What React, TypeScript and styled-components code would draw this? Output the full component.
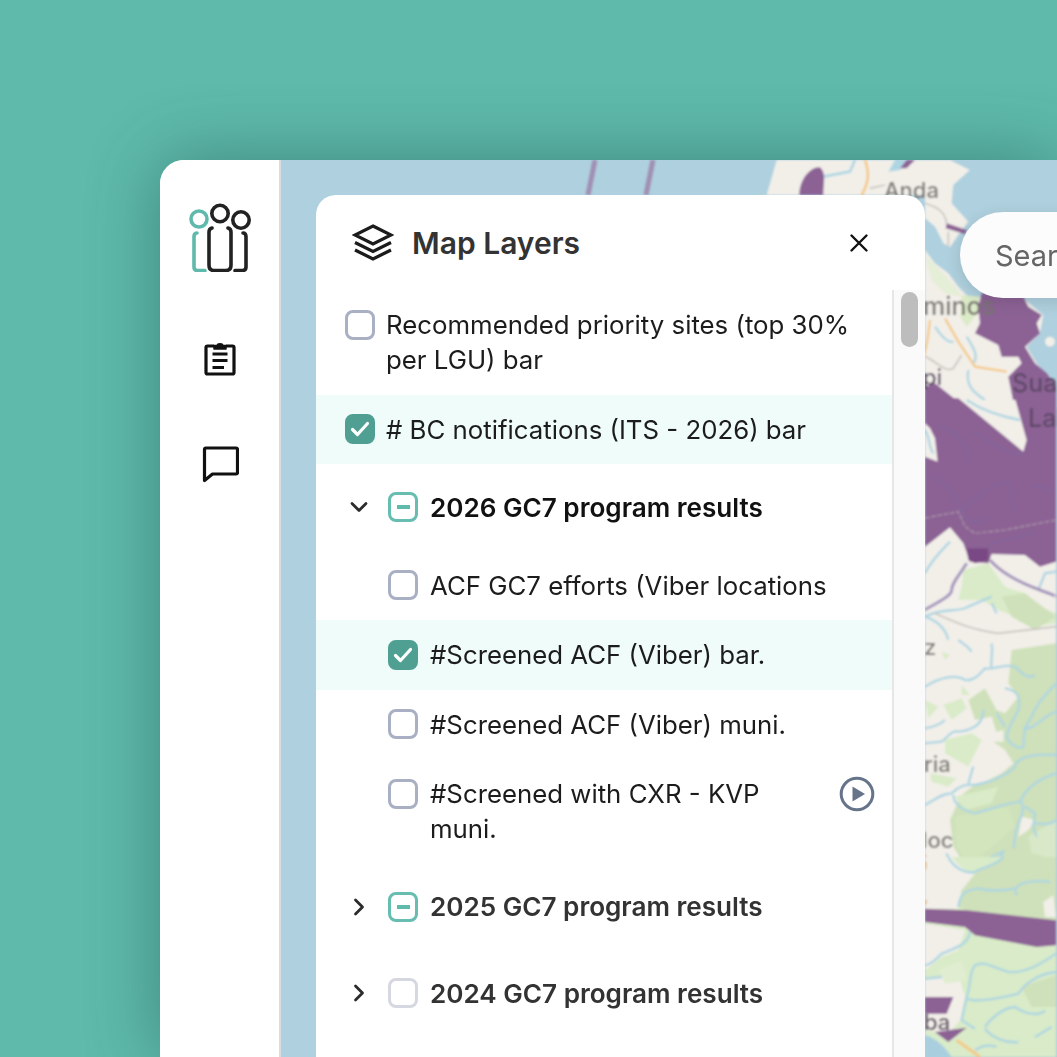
import React from 'react';
import styled, { createGlobalStyle, css } from 'styled-components';

const GlobalStyle = createGlobalStyle`
  html, body {
    margin: 0;
    height: 100%;
    overflow: hidden;
    background: #5fbaac;
    font-family: Inter, "Liberation Sans", sans-serif;
  }
`;

const Page = styled.div`
  height: 100vh;
  padding: 160px 0 0 160px;
  box-sizing: border-box;
  overflow: hidden;
`;

const AppWindow = styled.div`
  display: flex;
  height: 100%;
  border-radius: 24px 0 0 0;
  background: #fff;
  overflow: hidden;
  box-shadow: 0 0 70px rgba(20, 70, 62, 0.45);
`;

const Sidebar = styled.nav`
  flex: 0 0 121px;
  box-sizing: border-box;
  border-right: 2px solid #dcdcdc;
  display: flex;
  flex-direction: column;
  align-items: center;
  padding-top: 42px;
  background: #fff;
`;

const NavIcon = styled.div<{ $top: number }>`
  margin-top: ${p => p.$top}px;
  display: flex;
`;

const MapArea = styled.main`
  flex: 1;
  position: relative;
  overflow: hidden;
  background: #afd0de;
`;

const MapDrawing = styled.svg`
  position: absolute;
  inset: 0;
  width: 100%;
  height: 100%;
`;

const SearchPill = styled.div`
  position: absolute;
  left: 679px;
  top: 52px;
  width: 400px;
  height: 86px;
  box-sizing: border-box;
  padding-left: 35px;
  display: flex;
  align-items: center;
  border-radius: 43px;
  background: #fcfcfc;
  color: #666;
  font-size: 29px;
  box-shadow: 0 4px 16px rgba(0, 0, 0, 0.12);
`;

const Panel = styled.section`
  position: absolute;
  left: 35px;
  top: 35px;
  bottom: -20px;
  width: 609px;
  background: #fff;
  border-radius: 20px 20px 0 0;
  display: flex;
  flex-direction: column;
  overflow: hidden;
`;

const PanelHeader = styled.header`
  flex: 0 0 95px;
  display: flex;
  align-items: center;
  padding: 0 56px 0 36px;
  gap: 18px;
  box-sizing: border-box;
`;

const PanelTitle = styled.h2`
  flex: 1;
  margin: 0;
  font-size: 30px;
  font-weight: 600;
  color: #333;
`;

const PanelBody = styled.div`
  flex: 1;
  display: flex;
  min-height: 0;
`;

const LayerList = styled.div`
  flex: 1;
  min-width: 0;
`;

const ScrollTrack = styled.div`
  flex: 0 0 33px;
  box-sizing: border-box;
  border-left: 2px solid #e6e6e6;
  background: #fafafa;
  padding: 2px 7px 0 7px;
`;

const ScrollThumb = styled.div`
  height: 55px;
  border-radius: 9px;
  background: #bdbdbd;
`;

const Row = styled.div<{ $active?: boolean; $child?: boolean }>`
  display: flex;
  align-items: flex-start;
  gap: ${p => (p.$child ? 12 : 11)}px;
  padding: 17.25px 17px 17.25px ${p => (p.$child ? 72 : 29)}px;
  background: ${p => (p.$active ? '#effcfa' : 'transparent')};
`;

const GroupRow = styled.div`
  display: flex;
  align-items: center;
  height: 86.5px;
  padding-left: 29px;
`;

const ChevronSlot = styled.div`
  flex: 0 0 43px;
  display: flex;
  padding-left: 2px;
  box-sizing: border-box;
`;

const Label = styled.span`
  flex: 1;
  font-size: 25.8px;
  line-height: 35px;
  color: #1c1c1c;
`;

const GroupLabel = styled.span<{ $open?: boolean }>`
  margin-left: 12px;
  font-size: 26.1px;
  font-weight: 600;
  color: ${p => (p.$open ? '#111' : '#333')};
`;

const boxBase = css`
  flex: 0 0 30px;
  width: 30px;
  height: 30px;
  box-sizing: border-box;
  border-radius: 8px;
  display: flex;
  align-items: center;
  justify-content: center;
`;

const Box = styled.div<{ $state?: 'empty' | 'checked' | 'partial' | 'muted' }>`
  ${boxBase}
  margin-top: 2.5px;
  border: 3px solid
    ${p =>
      p.$state === 'checked'
        ? '#4f9f92'
        : p.$state === 'partial'
          ? '#66bdb0'
          : p.$state === 'muted'
            ? '#d5d8e1'
            : '#a9b0c3'};
  background: ${p => (p.$state === 'checked' ? '#4f9f92' : '#fff')};
`;

const GroupBox = styled(Box)`
  margin-top: 0;
`;

const Dash = styled.div`
  width: 13px;
  height: 4px;
  background: #5fbaac;
`;

const PlayButton = styled.div`
  flex: 0 0 36px;
  display: flex;
`;

const Check = () => (
  <svg width="22" height="22" viewBox="0 0 22 22" fill="none" stroke="#fff" strokeWidth="3.2" strokeLinecap="round" strokeLinejoin="round">
    <path d="M3.500 11.500 8.500 16.500 18.500 5.500" />
  </svg>
);

const Chevron = ({ open }: { open?: boolean }) => (
  <svg width="24" height="24" viewBox="0 0 24 24" fill="none" stroke="#2b2b2b" strokeWidth="2.8" strokeLinecap="round" strokeLinejoin="round">
    {open ? <path d="M5 8.500 12 15.500 19 8.500" /> : <path d="M8.500 5 15.500 12 8.500 19" />}
  </svg>
);

const Logo = () => (
  <svg width="64" height="70" viewBox="0 0 64 70" fill="none" strokeWidth="3.600" strokeLinecap="round" strokeLinejoin="round">
    <circle cx="11" cy="17" r="8" stroke="#5fbaac" />
    <circle cx="32" cy="11.500" r="8.200" stroke="#222" />
    <circle cx="53" cy="18" r="8.200" stroke="#222" />
    <path d="M9 31C6.500 31 6 33 6 35V65C6 67.500 7 68.500 9.500 68.500H17" stroke="#5fbaac" />
    <path d="M24 26C22 26.500 21 28 21 30V63C21 66.500 23 68.500 26 68.500H38C41 68.500 43 66.500 43 63V30C43 28 42 26.500 40 26" stroke="#222" />
    <path d="M55 31C57.500 31 58 33 58 35V65C58 67.500 57 68.500 54.500 68.500H47" stroke="#222" />
  </svg>
);

const ClipboardIcon = () => (
  <svg width="32" height="34" viewBox="0 0 32 34" fill="none" stroke="#111" strokeWidth="3.200" strokeLinejoin="round">
    <path d="M10 4H3.500C2.500 4 2 4.500 2 5.500V30.500C2 31.500 2.500 32 3.500 32H28.500C29.500 32 30 31.500 30 30.500V5.500C30 4.500 29.500 4 28.500 4H22" />
    <path d="M10 3.500H13C13.500 1 18.500 1 19 3.500H22V7H10Z" fill="#111" strokeWidth="1.500" />
    <path d="M8.500 12H23.500M8.500 18.500H23.500M8.500 25.500H20" />
  </svg>
);

const ChatIcon = () => (
  <svg width="38" height="38" viewBox="0 0 38 38" fill="none" stroke="#111" strokeWidth="3.200" strokeLinejoin="round">
    <path d="M3.500 34.500V3.500C3.500 2.500 4 2 5 2H35C36 2 36.500 2.500 36.500 3.500V26.500C36.500 27.500 36 28 35 28H11.500Z" />
  </svg>
);

const LayersIcon = () => (
  <svg width="42" height="38" viewBox="0 0 42 38" fill="none" stroke="#1c1c1c" strokeWidth="3.200" strokeLinejoin="miter" strokeLinecap="butt">
    <path d="M21 2 39 11 21 20 3 11Z" />
    <path d="M3 18.500 21 27.500 39 18.500" />
    <path d="M3 26 21 35 39 26" />
  </svg>
);

const CloseIcon = () => (
  <svg width="20" height="20" viewBox="0 0 20 20" stroke="#111" strokeWidth="2.400" strokeLinecap="round">
    <path d="M2.500 2.500 17.500 17.500M17.500 2.500 2.500 17.500" />
  </svg>
);

const PlayIcon = () => (
  <svg width="36" height="36" viewBox="0 0 36 36">
    <circle cx="18" cy="18" r="15.800" fill="none" stroke="#66748a" strokeWidth="3" />
    <path d="M13.500 10.500 26 18 13.500 25.500Z" fill="#66748a" />
  </svg>
);

const LAND = '#f2efe9';
const RIVER = '#aed6e2';
const PURPLE = '#8c6295';
const FOREST = '#cfe1ba';
const MEADOW = '#d9ebc8';

// Strip to the right of the panel, cut into crops; each group is in 3x units.
const northRivers = [
  'M30 500C50 530 70 550 85 545',
  'M125 530C150 570 160 590 145 610',
  'M130 630C120 680 150 700 180 720',
];

const middleRivers = [
  'M0 520C20 480 50 450 75 425',
  'M0 650C60 620 100 640 130 620L200 590',
  'M340 570L360 520 393 515',
  'M200 610L215 640',
  'M0 650C30 660 60 680 70 720',
];

const southRivers = [
  'M0 140C40 115 90 100 120 120 150 125 170 95 180 85 210 90 240 70 270 80 290 100 310 120 330 105',
  'M200 10C205 40 195 70 200 85M100 0C120 15 130 20 140 35',
  'M240 145C275 150 290 170 280 210 265 240 250 260 245 290 250 310 280 330 295 320 300 290 290 270 320 230 340 180 360 170 393 130',
  'M295 265C330 270 350 230 393 215',
  'M175 210C175 250 150 270 100 275 80 270 70 290 50 305L0 310',
  'M0 265C30 260 50 250 60 240M215 220L240 260',
  'M270 380C275 350 330 340 393 345',
  'M0 495C30 480 50 460 80 460 100 440 120 430 150 435 200 425 240 410 270 380',
  'M145 380L130 430',
  'M85 465C85 490 110 510 150 520 190 510 240 490 285 485 300 490 295 520 280 550 265 590 270 610 265 625',
  'M285 485C300 450 330 420 393 400',
  'M300 500L330 520 325 560 335 590M330 550C350 550 370 560 393 540',
  'M65 640C70 670 100 680 150 695 170 660 200 650 235 635 230 660 190 680 170 680',
];

const coastRivers = [
  'M70 0C90 40 130 50 150 45 170 30 210 30 235 0',
  'M100 150C105 110 120 100 160 95 200 105 240 100 270 95 290 70 340 70 375 75M270 95L275 115',
  'M135 225C130 260 100 270 50 290 30 310 20 320 0 325M0 365L50 360',
  'M393 290C350 320 300 350 250 345 200 330 180 310 150 325 130 350 140 380 125 420L110 490 150 515',
  'M125 425C160 440 240 420 280 410 300 380 340 350 393 345',
  'M180 510C200 480 240 450 270 450 300 470 340 480 360 460',
  'M180 515C200 540 240 560 280 555M150 580C180 560 200 565 215 570M330 540L380 510',
];

const MapLayer = () => (
  <MapDrawing viewBox="281 160 776 897" preserveAspectRatio="none">
    <defs>
      <filter id="soft" x="-5%" y="-5%" width="110%" height="110%">
        <feGaussianBlur stdDeviation="0.8" />
      </filter>
    </defs>
    <g filter="url(#soft)">
      {/* top strip above the panel */}
      <path d="M595 160 588 195M653 160 646 195" stroke="#a08fb3" strokeWidth="5" fill="none" />
      <g transform="translate(760 160) scale(0.3333)">
        <path d="M50 0H500V105H20Z" fill={LAND} />
        <path d="M190 50 270 35 285 0" fill="none" stroke={RIVER} strokeWidth="8" />
        <path d="M315 0C330 40 325 70 305 105" fill="none" stroke="#f5c986" strokeWidth="8" />
        <path d="M330 85 375 75" fill="none" stroke="#c9c6c0" strokeWidth="5" />
        <path d="M405 0 385 35 420 30 440 0Z" fill={RIVER} />
        <path d="M420 25 440 0H465L440 25Z" fill={PURPLE} />
        <path d="M118 105C118 60 150 20 180 22 200 40 190 70 190 105Z" fill={PURPLE} />
      </g>

      {/* crop 160-400 */}
      <g transform="translate(925 160) scale(0.3333)">
        <path d="M0 0H75L135 30 85 75 80 130 130 185 100 225 75 262 55 250 30 200 0 175Z" fill={LAND} />
        <path d="M0 270 30 310 70 340 100 380 130 410 300 420 355 465 345 520 305 560 335 610 393 680V725H0Z" fill={LAND} />
        <path d="M0 285 30 315 60 345 90 380 110 410 60 400 20 360Z" fill="#e5eed6" />
        <path d="M110 405 165 410 150 470 125 500 105 470Z" fill="#dcebc7" />
        <circle cx="375" cy="545" r="15" fill={LAND} />
        <path d="M0 130C30 140 60 150 65 190M70 215V260M0 590C30 600 60 640 85 625L110 585" fill="none" stroke="#c9c6c0" strokeWidth="5" />
        {northRivers.map(d => (
          <path key={d} d={d} fill="none" stroke={RIVER} strokeWidth="7" />
        ))}
        <path d="M15 480C10 540 0 580 -5 600M60 475 100 545 150 620 245 635" fill="none" stroke="#f5c986" strokeWidth="7" />
        <path d="M65 190 125 210 120 222 62 205Z" fill={PURPLE} />
        <path d="M170 400H290L310 440 350 465 335 490 345 520 300 560 330 610 365 640 393 680V725H265L250 650 290 610 280 590 230 590 220 555 150 520 165 490 160 440Z" fill={PURPLE} />
        <path d="M0 680 30 670 100 725H0Z" fill={PURPLE} />
      </g>

      {/* crop 400-640 */}
      <g transform="translate(925 400) scale(0.3333)">
        <rect x="0" y="0" width="393" height="725" fill={LAND} />
        <path d="M115 510 190 490 240 560 300 580 345 620 393 640V670L330 680 270 650 220 630 170 600 100 600 110 560Z" fill={MEADOW} />
        <path d="M230 590 300 580 393 650 330 690 260 650Z" fill={FOREST} />
        {middleRivers.map(d => (
          <path key={d} d={d} fill="none" stroke={RIVER} strokeWidth="7" />
        ))}
        <path d="M30 640C100 670 140 690 220 700L393 680" fill="none" stroke="#c9c6c0" strokeWidth="5" />
        <path d="M0 630C30 610 80 590 80 570S100 530 125 490M195 480C230 520 290 550 345 570S393 590 393 590" fill="none" stroke="#a596bd" strokeWidth="9" />
        <path d="M0 -5H100L295 155 305 120 270 -5H393V485L345 500 300 465 200 462 190 490 135 485 115 430 75 382 0 440Z" fill={PURPLE} />
        <path d="M0 70 15 85 30 115 38 185 0 170Z" fill={LAND} />
        <path d="M0 90C15 110 10 140 25 160M125 0C170 30 230 50 285 60" fill="none" stroke={RIVER} strokeWidth="7" />
        <path d="M125 445H190V480L150 490 130 480Z" fill="#7a4a85" />
        <g fill="none" stroke="#7b6a9e" strokeWidth="3.500" opacity="0.8">
          <path d="M40 80C100 90 130 140 130 190M30 230C80 270 100 300 110 330 160 290 210 240 250 250 260 290 270 320 265 335" />
          <path d="M150 100C200 120 240 170 300 160M110 330C130 370 160 380 190 350M320 260C350 250 370 280 393 270M190 435C230 420 290 410 330 400" />
        </g>
        <path d="M0 355C40 345 80 340 100 335L120 380 150 400 240 390 393 360" fill="none" stroke="#aa9aa5" strokeWidth="3.500" strokeDasharray="14 5" />
      </g>

      {/* crop 640-860 */}
      <g transform="translate(925 640) scale(0.3333)">
        <rect x="0" y="0" width="393" height="725" fill={LAND} />
        <path d="M260 30 393 10V725H150L85 620 75 540 105 470 140 440 180 425 230 400 265 370 240 330 205 305 215 280 200 230 150 240 130 180 180 145 215 210 240 220 280 170 250 130Z" fill={FOREST} />
        <path d="M0 280 70 265 110 300 60 330 0 340Z" fill={LAND} />
        <path d="M60 300 140 280 170 300 130 380 60 340Z" fill={MEADOW} />
        <path d="M200 280 235 270 235 305 200 305ZM195 340 230 335 225 390 150 420 160 380ZM290 530 330 540 310 570 280 590Z" fill={LAND} />
        <path d="M0 180 40 200 10 235ZM110 135 135 165 110 165ZM50 35 75 45 60 60ZM55 195 110 175 125 205 80 240ZM15 400 95 415 70 440 20 425Z" fill={MEADOW} />
        <path d="M90 470 220 440 200 490 120 510Z" fill={MEADOW} />
        <path d="M90 530 250 500 270 560 200 620 130 670 95 620Z" fill="#d3e5bd" />
        <path d="M310 590 393 540V660L320 640Z" fill="#d8e8c8" />
        {southRivers.map(d => (
          <path key={d} d={d} fill="none" stroke={RIVER} strokeWidth="7" />
        ))}
        <path d="M0 640Q18 665 0 700Z" fill="#f2bd72" />
      </g>

      {/* crop 857-1057 */}
      <g transform="translate(925 857) scale(0.3333)">
        <rect x="0" y="0" width="393" height="600" fill={MEADOW} />
        <path d="M0 0H80C110 40 140 50 150 50L110 100 100 155H0Z" fill={LAND} />
        <path d="M150 50 235 0H393V190L125 160 100 150 110 100Z" fill={FOREST} />
        <path d="M355 135 385 115 393 180H360Z" fill={LAND} />
        <path d="M0 200 120 220 100 280 50 300 0 340Z" fill={LAND} />
        <path d="M0 370 100 350 120 420 105 490 70 530 0 520Z" fill={LAND} />
        <path d="M40 340 110 310 125 370 60 380Z" fill="#e0edd0" />
        <path d="M290 390 393 355V450L320 450Z" fill={FOREST} />
        <path d="M0 10Q12 25 0 42ZM0 125 8 135 0 145Z" fill="#f2bd72" />
        {coastRivers.map(d => (
          <path key={d} d={d} fill="none" stroke={RIVER} strokeWidth="7" />
        ))}
        <path d="M0 155 125 160 393 190V265L335 270 150 235 120 210 0 195Z" fill={PURPLE} />
        <path d="M0 535C30 540 60 570 80 600H0Z" fill="#a9cfdf" />
        <path d="M0 420H85L65 470H0ZM30 525 125 512 70 555Z" fill={PURPLE} />
        <path d="M95 550 165 600" fill="none" stroke="#f5c986" strokeWidth="9" />
      </g>

      <g fontFamily="Inter, sans-serif" fontSize="22" fontWeight="500" fill="#77746f">
        <text x="884" y="198">Anda</text>
        <text x="923" y="315" fontSize="25">minos</text>
        <text x="1012" y="392" fontSize="25" fill="#5e4a68">Sual</text>
        <text x="1028" y="427" fontSize="25" fill="#5e4a68">Lab</text>
        <text x="923" y="385" fill="#5e4a68">pi</text>
        <text x="924" y="655">z</text>
        <text x="924" y="772">ria</text>
        <text x="922" y="848">loc</text>
        <text x="924" y="1030" fill="#5a4a60">ba</text>
      </g>
    </g>
  </MapDrawing>
);

export default function App() {
  return (
    <>
      <GlobalStyle />
      <Page>
        <AppWindow>
          <Sidebar>
            <Logo />
            <NavIcon $top={70}>
              <ClipboardIcon />
            </NavIcon>
            <NavIcon $top={70}>
              <ChatIcon />
            </NavIcon>
          </Sidebar>
          <MapArea>
            <MapLayer />
            <SearchPill>Search</SearchPill>
            <Panel>
              <PanelHeader>
                <LayersIcon />
                <PanelTitle>Map Layers</PanelTitle>
                <CloseIcon />
              </PanelHeader>
              <PanelBody>
                <LayerList>
                  <Row>
                    <Box />
                    <Label>Recommended priority sites (top 30% per LGU) bar</Label>
                  </Row>
                  <Row $active>
                    <Box $state="checked"><Check /></Box>
                    <Label># BC notifications (ITS - 2026) bar</Label>
                  </Row>
                  <GroupRow>
                    <ChevronSlot><Chevron open /></ChevronSlot>
                    <GroupBox $state="partial"><Dash /></GroupBox>
                    <GroupLabel $open>2026 GC7 program results</GroupLabel>
                  </GroupRow>
                  <Row $child>
                    <Box />
                    <Label>ACF GC7 efforts (Viber locations</Label>
                  </Row>
                  <Row $child $active>
                    <Box $state="checked"><Check /></Box>
                    <Label>#Screened ACF (Viber) bar.</Label>
                  </Row>
                  <Row $child>
                    <Box />
                    <Label>#Screened ACF (Viber) muni.</Label>
                  </Row>
                  <Row $child>
                    <Box />
                    <Label>#Screened with CXR - KVP muni.</Label>
                    <PlayButton><PlayIcon /></PlayButton>
                  </Row>
                  <GroupRow>
                    <ChevronSlot><Chevron /></ChevronSlot>
                    <GroupBox $state="partial"><Dash /></GroupBox>
                    <GroupLabel>2025 GC7 program results</GroupLabel>
                  </GroupRow>
                  <GroupRow>
                    <ChevronSlot><Chevron /></ChevronSlot>
                    <GroupBox $state="muted" />
                    <GroupLabel>2024 GC7 program results</GroupLabel>
                  </GroupRow>
                </LayerList>
                <ScrollTrack>
                  <ScrollThumb />
                </ScrollTrack>
              </PanelBody>
            </Panel>
          </MapArea>
        </AppWindow>
      </Page>
    </>
  );
}
